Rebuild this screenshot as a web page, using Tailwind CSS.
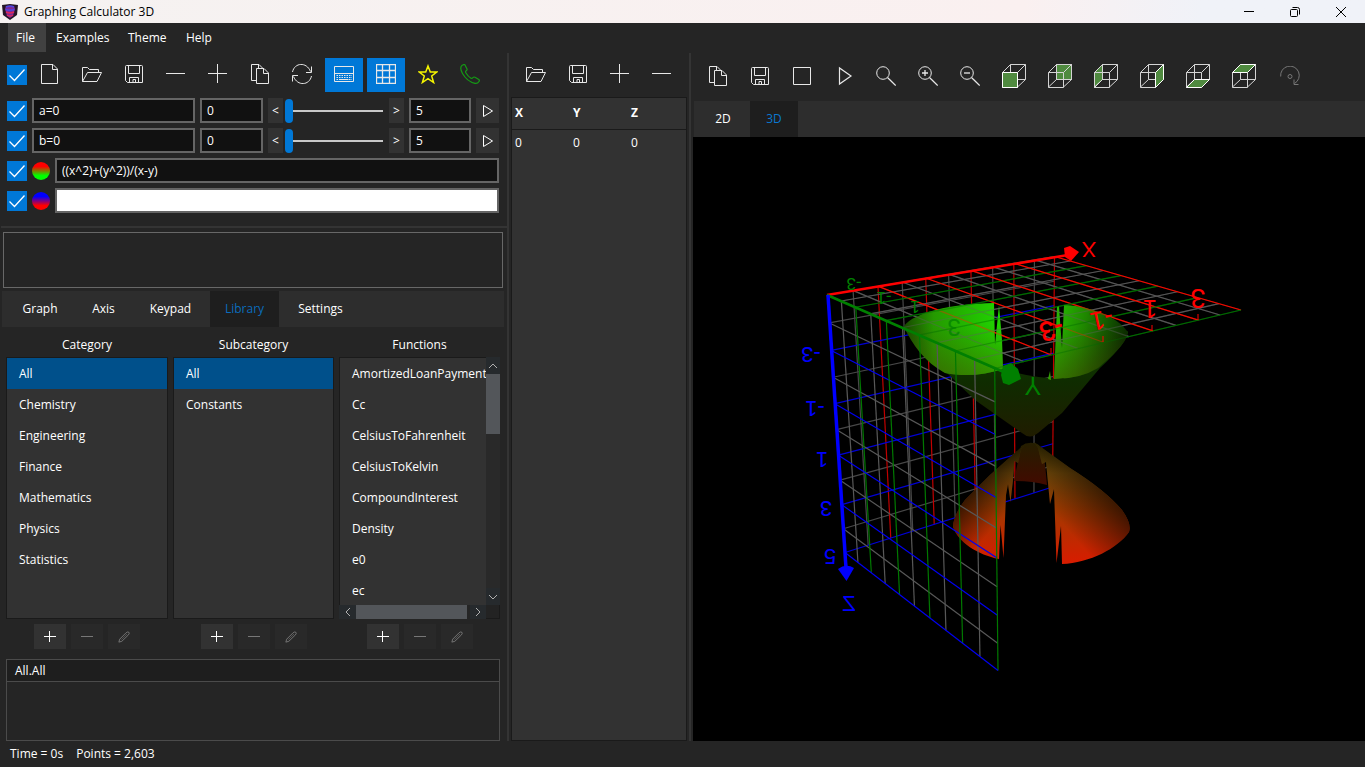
<!DOCTYPE html>
<html lang="en">
<head>
<meta charset="utf-8">
<title>Graphing Calculator 3D</title>
<script src="https://cdn.jsdelivr.net/npm/@tailwindcss/browser@4"></script>
</head>
<body class="h-screen overflow-hidden flex flex-col bg-[#252525] text-white text-[12px] leading-4 font-['Open_Sans','Noto_Sans',sans-serif]">

<svg class="hidden" aria-hidden="true">
  <defs>
    <symbol id="i-new" viewBox="0 0 20 20"><path d="M1.500.5H13L17.500 5V19.500H1.500ZM12.500.5V5.500H17.500"/></symbol>
    <symbol id="i-open" viewBox="0 0 20 20"><path d="M.5 17.500V3.500H5.500L7.500 5.500H16.500V8.500M.5 17.500L5.500 8.500H19.500L15 17.500Z"/></symbol>
    <symbol id="i-save" viewBox="0 0 20 20"><path d="M1.500 2.500Q1.500 1.500 2.500 1.500H17.500Q18.500 1.500 18.500 2.500V18.500H3.500L1.500 16.500ZM4.500 1.500V9.500H15.500V1.500M5.500 18.500V13.500H14.500V18.500M9 18.500V15.500H11.500V18.500"/></symbol>
    <symbol id="i-minus" viewBox="0 0 20 20"><path d="M0 9.500H19"/></symbol>
    <symbol id="i-plus" viewBox="0 0 20 20"><path d="M0 9.500H19M9.500 0V19"/></symbol>
    <symbol id="i-copy" viewBox="0 0 20 20"><path d="M6 16.500H1.500V.5H9L12.500 4M6.500 4.500H14L18.500 9V19.500H6.500ZM13.500 4.500V9.500H18.500M8.500.5V4"/></symbol>
    <symbol id="i-refresh" viewBox="0 0 20 20"><path d="M.5 8C2.500-1.500 14.500-2.500 18.500 7.500M19.500 2.500V8.500H14M19.500 12C17.500 21.500 5.500 22.500 1.500 12.500M.5 17.500V11.500H6"/></symbol>
    <symbol id="i-keys" viewBox="0 0 20 20"><path d="M.5 2.500H19.500V17.500H.5ZM.5 9.500H19.500"/><path d="M2.500 11.500H18M2.500 13.500H18M2.500 15.500H18" stroke-dasharray="1.500 1"/><path d="M5.500 15.500H14.500" /></symbol>
    <symbol id="i-grid" viewBox="0 0 20 20"><path d="M.5.5H19.500V19.500H.5ZM6.500 1V19M13.500 1V19M1 6.500H19M1 13.500H19" stroke-width="1.300"/></symbol>
    <symbol id="i-star" viewBox="0 0 20 20"><path d="M10 2L12.300 8.100H18.700L13.700 12L15.600 18.500L10 14.700L4.400 18.500L6.300 12L1.300 8.100H7.700Z" stroke-width="1.500"/></symbol>
    <symbol id="i-phone" viewBox="0 0 20 20"><path d="M2.200 1.200L4 .5Q5 .5 5.500 2L7 5Q7.300 6 6.200 6.700Q5 7.500 6 9Q8 12.500 11 14.300Q12.200 14.700 13 13.500Q13.800 12.700 15 13.200L18.800 15.500Q19.800 16.500 19 17.500Q17.500 19.800 15 19.300Q7 17.500 2.500 9.500Q-.8 3.500 2.200 1.200Z" stroke-width="1.200"/></symbol>
    <symbol id="i-stop" viewBox="0 0 20 20"><path d="M1.500 1.500H18.500V18.500H1.500Z"/></symbol>
    <symbol id="i-play" viewBox="0 0 20 20"><path d="M5.500 2V18L17 10Z" stroke-width="1.200"/></symbol>
    <symbol id="i-find" viewBox="0 0 20 20"><circle cx="7" cy="7" r="6.300"/><path d="M11.500 11.500L19.700 19.500" stroke-width="1.300"/></symbol>
    <symbol id="i-in" viewBox="0 0 20 20"><circle cx="7" cy="7" r="6.300"/><path d="M11.500 11.500L19.700 19.500" stroke-width="1.300"/><path d="M4 7H10M7 4V10" stroke-width="1.300"/></symbol>
    <symbol id="i-out" viewBox="0 0 20 20"><circle cx="7" cy="7" r="6.300"/><path d="M11.500 11.500L19.700 19.500" stroke-width="1.300"/><path d="M4 7H10" stroke-width="1.300"/></symbol>
    <symbol id="i-cube" viewBox="0 0 24 24"><path d="M8.500.5H23.500V15.500H8.500ZM.5 8.500L8.500.5M15.500 8.500L23.500.5M.5 23L8.500 15.500M15.500 23L23.500 15.500M.5 8.500H15.500V23.500H.5Z"/></symbol>
    <symbol id="i-rot" viewBox="0 0 20 20"><path d="M.7 10.500A9.300 9.300 0 1 1 14.500 17.500M14 13.500V18.500H18.500" /><circle cx="10" cy="10.500" r="2"/></symbol>
    <symbol id="i-pencil" viewBox="0 0 14 14"><path d="M1 13L2 9.500L9.500 2Q11.500.5 12.700 1.500Q13.700 2.700 12.200 4.500L4.500 12Z"/><path d="M4 10L10.500 3.500" stroke-width=".6"/></symbol>
    <symbol id="i-check" viewBox="0 0 20 20"><path d="M2.500 10.500L7.500 15.500L17.500 4.500" stroke-width="1.300"/></symbol>
  </defs>
</svg>

<header class="h-[23px] shrink-0 flex items-center pl-[2px] pr-px text-black bg-linear-to-r from-[#f5f2f1] via-[#faf0f0] via-75% to-[#f0f2f8] to-88%">
  <svg class="w-4 h-4" viewBox="0 0 16 16" aria-hidden="true">
    <path d="M0 1L8 0L16 1L15 11L8 16L1 11Z" fill="#241626"/>
    <path d="M4 2H12L13 5L11 12L8 14L5 12L3 5Z" fill="#7a2a98"/>
    <path d="M4 3Q8 1 12 3M3.500 5.500Q8 7 12.500 5.500" stroke="#5146e0" stroke-width="1.500" fill="none"/>
    <path d="M4 8Q8 10 12 8M5 11Q8 13 11 11" stroke="#e02858" stroke-width="1.500" fill="none"/>
  </svg>
  <h1 class="ml-[6px] flex-1">Graphing Calculator 3D</h1>
  <div class="flex h-full text-black">
    <button aria-label="Minimize" class="w-[46px] grid place-items-center"><svg class="w-3 h-3" viewBox="0 0 12 12" fill="none" stroke="currentColor"><path d="M1 5.500H11"/></svg></button>
    <button aria-label="Restore" class="w-[46px] grid place-items-center"><svg class="w-3 h-3" viewBox="0 0 12 12" fill="none" stroke="currentColor"><rect x="1.500" y="3.500" width="7" height="7" rx="1"/><path d="M3.500 1.500H8.500Q10.500 1.500 10.500 3.500V8.500"/></svg></button>
    <button aria-label="Close" class="w-[46px] grid place-items-center"><svg class="w-3 h-3" viewBox="0 0 12 12" fill="none" stroke="currentColor"><path d="M1 1L11 11M11 1L1 11"/></svg></button>
  </div>
</header>

<nav class="h-[30px] shrink-0 flex pl-2" aria-label="Menu">
  <button class="h-[29px] w-[38px] mr-[2px] pl-2 text-left bg-[#414141]">File</button>
  <button class="h-[29px] w-[72px] pl-2 text-left">Examples</button>
  <button class="h-[29px] w-[58px] pl-2 text-left">Theme</button>
  <button class="h-[29px] w-[40px] pl-2 text-left">Help</button>
</nav>

<main class="flex-1 min-h-0 flex">
  <section class="w-[507px] shrink-0 flex flex-col">
    <div class="mt-[5px] h-[34px] flex items-center gap-1 pl-[7px] [&_button]:w-[38px] [&_button]:h-[34px] [&_button]:pb-[2px] [&_button]:grid [&_button]:place-items-center [&_button_svg]:w-5 [&_button_svg]:h-5 [&_svg]:fill-none [&_svg]:stroke-current text-[#e8e8e8]">
      <label class="relative w-5 h-5"><input type="checkbox" checked aria-label="Select all" class="appearance-none block w-5 h-5 bg-[#0078d7]"><svg class="absolute inset-0 w-5 h-5 pointer-events-none text-white"><use href="#i-check"/></svg></label>
      <button aria-label="New"><svg><use href="#i-new"/></svg></button>
      <button aria-label="Open"><svg><use href="#i-open"/></svg></button>
      <button aria-label="Save"><svg><use href="#i-save"/></svg></button>
      <button aria-label="Remove"><svg><use href="#i-minus"/></svg></button>
      <button aria-label="Add"><svg><use href="#i-plus"/></svg></button>
      <button aria-label="Copy"><svg><use href="#i-copy"/></svg></button>
      <button aria-label="Refresh"><svg><use href="#i-refresh"/></svg></button>
      <button aria-label="Keypad" aria-pressed="true" class="bg-[#0078d7]"><svg><use href="#i-keys"/></svg></button>
      <button aria-label="Table" aria-pressed="true" class="bg-[#0078d7]"><svg><use href="#i-grid"/></svg></button>
      <button aria-label="Favorites" class="text-[#f5f500]"><svg><use href="#i-star"/></svg></button>
      <button aria-label="Contact" class="text-[#159a15]"><svg><use href="#i-phone"/></svg></button>
    </div>

    <div class="mt-[6px] flex flex-col gap-[5px] pl-[7px] pr-2 [&>div]:flex [&>div]:items-center [&>div]:gap-[5px] [&>div]:h-[25px] [&_label_svg]:fill-none [&_label_svg]:stroke-white">
      <div>
        <label class="relative w-5 h-5"><input type="checkbox" checked aria-label="Use a" class="appearance-none block w-5 h-5 bg-[#0078d7]"><svg class="absolute inset-0 w-5 h-5 pointer-events-none"><use href="#i-check"/></svg></label>
        <input aria-label="Parameter a" value="a=0" class="w-[163px] h-[25px] px-[5px] border-2 border-[#656565] bg-[#111]">
        <input aria-label="Minimum a" value="0" class="w-[63px] h-[25px] px-[5px] border-2 border-[#656565] bg-[#111]">
        <div class="flex-1 min-w-0 flex items-center">
          <button aria-label="Decrease a" class="w-[15px] shrink-0 h-[25px] bg-[#323232]">&lt;</button>
          <input type="range" min="0" max="5" value="0" aria-label="Value a" class="flex-1 min-w-0 ml-[2px] mr-[6px] h-6 appearance-none bg-transparent [&::-webkit-slider-runnable-track]:h-[2px] [&::-webkit-slider-runnable-track]:bg-[#c8c8c8] [&::-webkit-slider-thumb]:appearance-none [&::-webkit-slider-thumb]:w-2 [&::-webkit-slider-thumb]:h-6 [&::-webkit-slider-thumb]:-mt-[11px] [&::-webkit-slider-thumb]:rounded [&::-webkit-slider-thumb]:bg-[#0078d7]">
          <button aria-label="Increase a" class="w-[15px] shrink-0 h-[25px] bg-[#323232]">&gt;</button>
        </div>
        <input aria-label="Maximum a" value="5" class="w-[62px] h-[25px] px-[5px] border-2 border-[#656565] bg-[#111]">
        <button aria-label="Play a" class="w-[23px] h-[25px] bg-[#323232] grid place-items-center"><svg class="w-3 h-3 fill-none stroke-white" viewBox="0 0 12 12"><path d="M1.500.500V11.500L10.500 6Z"/></svg></button>
      </div>
      <div>
        <label class="relative w-5 h-5"><input type="checkbox" checked aria-label="Use b" class="appearance-none block w-5 h-5 bg-[#0078d7]"><svg class="absolute inset-0 w-5 h-5 pointer-events-none"><use href="#i-check"/></svg></label>
        <input aria-label="Parameter b" value="b=0" class="w-[163px] h-[25px] px-[5px] border-2 border-[#656565] bg-[#111]">
        <input aria-label="Minimum b" value="0" class="w-[63px] h-[25px] px-[5px] border-2 border-[#656565] bg-[#111]">
        <div class="flex-1 min-w-0 flex items-center">
          <button aria-label="Decrease b" class="w-[15px] shrink-0 h-[25px] bg-[#323232]">&lt;</button>
          <input type="range" min="0" max="5" value="0" aria-label="Value b" class="flex-1 min-w-0 ml-[2px] mr-[6px] h-6 appearance-none bg-transparent [&::-webkit-slider-runnable-track]:h-[2px] [&::-webkit-slider-runnable-track]:bg-[#c8c8c8] [&::-webkit-slider-thumb]:appearance-none [&::-webkit-slider-thumb]:w-2 [&::-webkit-slider-thumb]:h-6 [&::-webkit-slider-thumb]:-mt-[11px] [&::-webkit-slider-thumb]:rounded [&::-webkit-slider-thumb]:bg-[#0078d7]">
          <button aria-label="Increase b" class="w-[15px] shrink-0 h-[25px] bg-[#323232]">&gt;</button>
        </div>
        <input aria-label="Maximum b" value="5" class="w-[62px] h-[25px] px-[5px] border-2 border-[#656565] bg-[#111]">
        <button aria-label="Play b" class="w-[23px] h-[25px] bg-[#323232] grid place-items-center"><svg class="w-3 h-3 fill-none stroke-white" viewBox="0 0 12 12"><path d="M1.500.500V11.500L10.500 6Z"/></svg></button>
      </div>
      <div>
        <label class="relative w-5 h-5"><input type="checkbox" checked aria-label="Show function 1" class="appearance-none block w-5 h-5 bg-[#0078d7]"><svg class="absolute inset-0 w-5 h-5 pointer-events-none"><use href="#i-check"/></svg></label>
        <button aria-label="Color of function 1" class="w-[18px] h-[18px] rounded-full bg-linear-to-b/srgb from-[#f00] from-25% to-[#0f0] to-75%"></button>
        <input aria-label="Function 1" value="((x^2)+(y^2))/(x-y)" class="flex-1 min-w-0 h-[25px] px-[5px] border-2 border-[#656565] bg-[#111]">
      </div>
      <div>
        <label class="relative w-5 h-5"><input type="checkbox" checked aria-label="Show function 2" class="appearance-none block w-5 h-5 bg-[#0078d7]"><svg class="absolute inset-0 w-5 h-5 pointer-events-none"><use href="#i-check"/></svg></label>
        <button aria-label="Color of function 2" class="w-[18px] h-[18px] rounded-full bg-linear-to-b/srgb from-[#00f] from-25% to-[#f00] to-75%"></button>
        <input aria-label="Function 2" class="flex-1 min-w-0 h-[25px] px-[5px] border-2 border-[#656565] bg-white text-black">
      </div>
    </div>

    <div class="mt-[13px] ml-px h-[2px] shrink-0 bg-[#343434]"></div>
    <textarea aria-label="Result" readonly class="block mt-1 ml-[3px] mr-1 h-[56px] shrink-0 resize-none border border-[#686868]"></textarea>

    <div role="tablist" class="mt-[3px] ml-[2px] mr-[3px] pl-[2px] h-9 shrink-0 flex bg-[#2d2d2d]">
      <button role="tab" class="w-[72px]">Graph</button>
      <button role="tab" class="w-[55px]">Axis</button>
      <button role="tab" class="w-[79px]">Keypad</button>
      <button role="tab" aria-selected="true" class="w-[69px] bg-[#1e1e1e] text-[#0a6cbd]">Library</button>
      <button role="tab" class="w-[83px]">Settings</button>
    </div>

    <div class="flex-1 min-h-0 grid grid-cols-[162fr_161fr_161fr] gap-[5px] pl-[6px] pr-[7px]">
      <div class="flex flex-col min-h-0 min-w-0">
        <h2 class="h-[30px] pt-[5px] flex items-center justify-center">Category</h2>
        <ul class="flex-1 min-h-0 overflow-hidden border border-[#1a1a1a] bg-[#323232] [&>li]:h-[31px] [&>li]:pl-3 [&>li]:flex [&>li]:items-center">
          <li class="bg-[#00508b]">All</li><li>Chemistry</li><li>Engineering</li><li>Finance</li><li>Mathematics</li><li>Physics</li><li>Statistics</li>
        </ul>
        <div class="mt-[5px] flex justify-center gap-[5px] [&>button]:w-8 [&>button]:h-[25px] [&>button]:grid [&>button]:place-items-center [&_svg]:w-3 [&_svg]:h-3 [&_svg]:fill-none [&_svg]:stroke-current">
          <button aria-label="Add category" class="bg-[#323232]"><svg viewBox="0 0 12 12"><path d="M0 5.500H12M5.500 0V11"/></svg></button>
          <button aria-label="Remove category" disabled class="bg-[#292929] text-[#777]"><svg viewBox="0 0 12 12"><path d="M0 5.500H12"/></svg></button>
          <button aria-label="Edit category" disabled class="bg-[#292929] text-[#808080]"><svg viewBox="0 0 14 14"><use href="#i-pencil" width="14" height="14"/></svg></button>
        </div>
      </div>
      <div class="flex flex-col min-h-0 min-w-0">
        <h2 class="h-[30px] pt-[5px] flex items-center justify-center">Subcategory</h2>
        <ul class="flex-1 min-h-0 overflow-hidden border border-[#1a1a1a] bg-[#323232] [&>li]:h-[31px] [&>li]:pl-3 [&>li]:flex [&>li]:items-center">
          <li class="bg-[#00508b]">All</li><li>Constants</li>
        </ul>
        <div class="mt-[5px] flex justify-center gap-[5px] [&>button]:w-8 [&>button]:h-[25px] [&>button]:grid [&>button]:place-items-center [&_svg]:w-3 [&_svg]:h-3 [&_svg]:fill-none [&_svg]:stroke-current">
          <button aria-label="Add subcategory" class="bg-[#323232]"><svg viewBox="0 0 12 12"><path d="M0 5.500H12M5.500 0V11"/></svg></button>
          <button aria-label="Remove subcategory" disabled class="bg-[#292929] text-[#777]"><svg viewBox="0 0 12 12"><path d="M0 5.500H12"/></svg></button>
          <button aria-label="Edit subcategory" disabled class="bg-[#292929] text-[#808080]"><svg viewBox="0 0 14 14"><use href="#i-pencil" width="14" height="14"/></svg></button>
        </div>
      </div>
      <div class="flex flex-col min-h-0 min-w-0">
        <h2 class="h-[30px] pt-[5px] flex items-center justify-center">Functions</h2>
        <div class="flex-1 min-h-0 flex flex-col">
          <div class="flex-1 min-h-0 flex">
            <ul class="flex-1 min-w-0 overflow-hidden border border-r-0 border-b-0 border-[#1a1a1a] bg-[#323232] [&>li]:h-[31px] [&>li]:pl-3 [&>li]:flex [&>li]:items-center">
              <li>AmortizedLoanPayment</li><li>Cc</li><li>CelsiusToFahrenheit</li><li>CelsiusToKelvin</li><li>CompoundInterest</li><li>Density</li><li>e0</li><li>ec</li>
            </ul>
            <div class="w-[14px] flex flex-col bg-[#292929] text-[#b0b0b0] [&_svg]:w-[10px] [&_svg]:h-[10px] [&_svg]:fill-none [&_svg]:stroke-current">
              <button aria-label="Scroll up" class="h-[17px] grid place-items-center bg-[#262a2d]"><svg viewBox="0 0 10 10"><path d="M1 7L5 3L9 7"/></svg></button>
              <div class="h-[60px] bg-[#53565a]"></div>
              <button aria-label="Scroll down" class="mt-auto h-[17px] grid place-items-center bg-[#262a2d]"><svg viewBox="0 0 10 10"><path d="M1 3L5 7L9 3"/></svg></button>
            </div>
          </div>
          <div class="h-[14px] flex text-[#b0b0b0] [&_svg]:w-[10px] [&_svg]:h-[10px] [&_svg]:fill-none [&_svg]:stroke-current">
            <button aria-label="Scroll left" class="w-[17px] grid place-items-center bg-[#262a2d]"><svg viewBox="0 0 10 10"><path d="M7 1L3 5L7 9"/></svg></button>
            <div class="flex-1 mr-[3px] bg-[#53565a]"></div>
            <button aria-label="Scroll right" class="w-4 grid place-items-center bg-[#262a2d]"><svg viewBox="0 0 10 10"><path d="M3 1L7 5L3 9"/></svg></button>
            <div class="w-[14px] border-r border-b border-[#1a1a1a] bg-[#232323]"></div>
          </div>
        </div>
        <div class="mt-[5px] flex justify-center gap-[5px] [&>button]:w-8 [&>button]:h-[25px] [&>button]:grid [&>button]:place-items-center [&_svg]:w-3 [&_svg]:h-3 [&_svg]:fill-none [&_svg]:stroke-current">
          <button aria-label="Add function" class="bg-[#323232]"><svg viewBox="0 0 12 12"><path d="M0 5.500H12M5.500 0V11"/></svg></button>
          <button aria-label="Remove function" disabled class="bg-[#292929] text-[#777]"><svg viewBox="0 0 12 12"><path d="M0 5.500H12"/></svg></button>
          <button aria-label="Edit function" disabled class="bg-[#292929] text-[#808080]"><svg viewBox="0 0 14 14"><use href="#i-pencil" width="14" height="14"/></svg></button>
        </div>
      </div>
    </div>

    <div class="mt-[10px] ml-[6px] mr-[7px] h-[82px] shrink-0 border border-[#4b4b4b]">
      <div class="h-[22px] pl-2 flex items-center border-b border-[#4b4b4b] bg-[#1e1e1e]">All.All</div>
    </div>
  </section>

  <div class="w-[2px] shrink-0 bg-[#343434]"></div>

  <section class="w-[176px] mx-[2px] shrink-0 flex flex-col">
    <div class="mt-1 h-[34px] flex gap-1 pl-[6px] text-[#e8e8e8] [&_button]:w-[38px] [&_button]:grid [&_button]:place-items-center [&_svg]:w-5 [&_svg]:h-5 [&_svg]:fill-none [&_svg]:stroke-current">
      <button aria-label="Open table"><svg><use href="#i-open"/></svg></button>
      <button aria-label="Save table"><svg><use href="#i-save"/></svg></button>
      <button aria-label="Add row"><svg><use href="#i-plus"/></svg></button>
      <button aria-label="Remove row"><svg><use href="#i-minus"/></svg></button>
    </div>
    <div class="mt-[6px] flex-1 border border-[#1a1a1a] bg-[#323232]">
      <table class="w-full table-fixed border-collapse text-left">
        <thead><tr class="h-[31px] border-b border-[#1a1a1a]"><th class="w-[58px] p-0 pl-[3px]">X</th><th class="w-[58px] p-0 pl-[3px]">Y</th><th class="p-0 pl-[3px]">Z</th></tr></thead>
        <tbody><tr class="h-[27px]"><td class="p-0 pl-[3px]">0</td><td class="p-0 pl-[3px]">0</td><td class="p-0 pl-[3px]">0</td></tr></tbody>
      </table>
    </div>
  </section>

  <div class="w-[2px] shrink-0 bg-[#343434]"></div>

  <section class="ml-[2px] flex-1 min-w-0 flex flex-col">
    <div class="h-[46px] mb-[2px] shrink-0 flex items-center gap-1 pl-[6px] text-[#e8e8e8] [&_button]:h-[34px] [&_button]:grid [&_button]:place-items-center [&_svg]:fill-none [&_svg]:stroke-current [&_svg]:w-5 [&_svg]:h-5">
      <button class="w-[38px]" aria-label="Copy graph"><svg><use href="#i-copy"/></svg></button>
      <button class="w-[38px]" aria-label="Save graph"><svg><use href="#i-save"/></svg></button>
      <button class="w-[38px]" aria-label="Stop"><svg><use href="#i-stop"/></svg></button>
      <button class="w-[38px]" aria-label="Play"><svg><use href="#i-play"/></svg></button>
      <button class="w-[38px]" aria-label="Zoom reset"><svg><use href="#i-find"/></svg></button>
      <button class="w-[38px]" aria-label="Zoom in"><svg><use href="#i-in"/></svg></button>
      <button class="w-[38px]" aria-label="Zoom out"><svg><use href="#i-out"/></svg></button>
      <div class="flex gap-1 text-[#d4d4d4] [&_button]:w-[42px] [&_.cube]:w-6 [&_.cube]:h-6">
        <button aria-label="Front view"><svg class="cube" viewBox="0 0 24 24"><use href="#i-cube"/><path d="M.5 8.500H15.500V23.500H.5Z" fill="#4f8a3f" stroke="#fff"/></svg></button>
        <button aria-label="Back view"><svg class="cube" viewBox="0 0 24 24"><path d="M8.500.5H23.500V15.500H8.500Z" fill="#4f8a3f" stroke="#fff"/><use href="#i-cube"/></svg></button>
        <button aria-label="Left view"><svg class="cube" viewBox="0 0 24 24"><path d="M.5 8.500L8.500.5V15.500L.5 23.500Z" fill="#4f8a3f" stroke="#fff"/><use href="#i-cube"/></svg></button>
        <button aria-label="Right view"><svg class="cube" viewBox="0 0 24 24"><use href="#i-cube"/><path d="M15.500 8.500L23.500.5V15.500L15.500 23.500Z" fill="#4f8a3f" stroke="#fff"/></svg></button>
        <button aria-label="Bottom view"><svg class="cube" viewBox="0 0 24 24"><use href="#i-cube"/><path d="M.5 23.500L8.500 15.500H23.500L15.500 23.500Z" fill="#4f8a3f" stroke="#fff"/></svg></button>
        <button aria-label="Top view"><svg class="cube" viewBox="0 0 24 24"><use href="#i-cube"/><path d="M.5 8.500L8.500.5H23.500L15.500 8.500Z" fill="#4f8a3f" stroke="#fff"/></svg></button>
        <button aria-label="Rotate" disabled class="text-[#777]"><svg><use href="#i-rot"/></svg></button>
      </div>
    </div>
    <div role="tablist" class="h-9 shrink-0 flex ml-px pl-[2px] bg-[#2d2d2d]">
      <button role="tab" class="w-[54px]">2D</button>
      <button role="tab" aria-selected="true" class="w-12 bg-[#1e1e1e] text-[#0a78d0]">3D</button>
    </div>
    <svg class="flex-1 min-h-0 w-full bg-black" viewBox="693 137 672 604" role="img" aria-label="3D plot">
      <defs>
        <linearGradient id="upL" x1="0" y1="0" x2="1" y2="0"><stop offset="0" stop-color="#184800"/><stop offset=".3" stop-color="#259a00"/><stop offset="1" stop-color="#20d800"/></linearGradient>
        <linearGradient id="shade" x1="0" y1="0" x2="0" y2="1"><stop offset=".3" stop-color="#503000" stop-opacity="0"/><stop offset="1" stop-color="#503000" stop-opacity=".4"/></linearGradient>
        <linearGradient id="upR" x1="0" y1="0" x2="1" y2=".2"><stop offset="0" stop-color="#26c000"/><stop offset=".45" stop-color="#1f8600"/><stop offset="1" stop-color="#0a2e00"/></linearGradient>
        <linearGradient id="upB" x1="0" y1="0" x2="0" y2="1"><stop offset="0" stop-color="#0e4400"/><stop offset=".5" stop-color="#0f2c00"/><stop offset="1" stop-color="#201c00"/></linearGradient>
        <linearGradient id="lo" gradientUnits="userSpaceOnUse" x1="0" y1="443" x2="0" y2="563"><stop offset="0" stop-color="#3a3200"/><stop offset=".25" stop-color="#80520a"/><stop offset=".55" stop-color="#a03a00"/><stop offset="1" stop-color="#d81c00"/></linearGradient>
        <linearGradient id="loDarkR" gradientUnits="userSpaceOnUse" x1="1068" y1="530" x2="1118" y2="488"><stop offset="0" stop-color="#000" stop-opacity="0"/><stop offset="1" stop-color="#000" stop-opacity=".75"/></linearGradient>
        <linearGradient id="loDarkL" gradientUnits="userSpaceOnUse" x1="1000" y1="520" x2="965" y2="490"><stop offset="0" stop-color="#000" stop-opacity="0"/><stop offset="1" stop-color="#000" stop-opacity=".75"/></linearGradient>
        <linearGradient id="loIn" x1="0" y1="0" x2="0" y2="1"><stop offset="0" stop-color="#241e00"/><stop offset="1" stop-color="#420a00"/></linearGradient>
      </defs>
      <g id="back" fill="none"></g>
      <g>
        <path d="M904 327C912 345 930 362 948 374L975 400L1022 433Q1030 440 1038 433L1062 413L1100 368Q1128 342 1128 331L1063 379Q1030 378 1003 369Z" fill="url(#upB)"/>
        <path d="M904 326C915 312 950 304 994 303L995 345L999 305L1002 340L1003 369C985 375 965 377 945 373C925 362 912 345 904 326Z" fill="url(#upL)"/>
        <path d="M904 326C915 312 950 304 994 303L995 345L999 305L1002 340L1003 369C985 375 965 377 945 373C925 362 912 345 904 326Z" fill="url(#shade)"/>
        <path d="M1054 379L1057 307L1059 306L1062 348L1064 305C1090 306 1118 317 1127 331C1130 340 1112 356 1098 368Q1080 379 1054 379Z" fill="url(#upR)"/>
        <path d="M1054 379L1057 307L1059 306L1062 348L1064 305C1090 306 1118 317 1127 331C1130 340 1112 356 1098 368Q1080 379 1054 379Z" fill="url(#shade)"/>
        <path d="M1048 379L1050 371L1051 380Z" fill="#2fa000"/>
        <path d="M1021 446L1014 481Q1032 481 1047 485L1045 464L1039 445Q1030 440 1021 446Z" fill="url(#loIn)"/>
        <path d="M1026 443L1008 459L990 475L965 500Q953 516 953 527C958 542 978 555 999 559L1000.500 525L1003.500 558L1006 495L1008 484L1010.500 502L1013 480L1014.500 461L1018 463L1021 449Z" fill="url(#lo)"/>
        <path d="M1026 443L1008 459L990 475L965 500Q953 516 953 527C958 542 978 555 999 559L1000.500 525L1003.500 558L1006 495L1008 484L1010.500 502L1013 480L1014.500 461L1018 463L1021 449Z" fill="url(#loDarkL)"/>
        <path d="M1034 442L1038 448L1042 464L1046 462L1050 504L1054 489L1056.500 563L1061 526L1062 564C1090 563 1118 548 1129 532Q1132 524 1122 510Q1105 490 1070 468Z" fill="url(#lo)"/>
        <path d="M1034 442L1038 448L1042 464L1046 462L1050 504L1054 489L1056.500 563L1061 526L1062 564C1090 563 1118 548 1129 532Q1132 524 1122 510Q1105 490 1070 468Z" fill="url(#loDarkR)"/>
      </g>
      <g id="veil" fill="none" opacity=".4"></g>
      <g id="front" fill="none"></g>
      <g>
        <path d="M827 295L1068 255" stroke="#f00" stroke-width="2.500"/>
        <path d="M827 295L1006 373" stroke="#008000" stroke-width="2.500"/>
        <path d="M828 295L846 568" stroke="#00f" stroke-width="3.500"/>
        <path d="M1064 248L1070 246L1079 252L1071 261L1065 257Z" fill="#f00"/>
        <path d="M1003 366L1011 363L1018 369L1021 379L1009 385L1003 383L1001 375Z" fill="#008000"/>
        <path d="M838 569Q846 563 854 568L846.500 581Z" fill="#00f"/>
        <path d="M1051 354V348M1103 342V336M1152 331V325M1198 320V314" stroke="#f00"/>
      </g>
      <g font-family="Liberation Sans, sans-serif" text-anchor="middle" font-size="25">
        <g fill="#f00">
          <text transform="translate(1089 242) rotate(180)" font-size="22">X</text>
          <text transform="translate(1049 321) rotate(164)" font-size="27" stroke="#f00" stroke-width=".5">-3</text>
          <text transform="translate(1100 311) rotate(168)" font-size="26">-1</text>
          <text transform="translate(1150 300) rotate(180)" font-size="26">1</text>
          <text transform="translate(1198 289) rotate(180)" font-size="27">3</text>
        </g>
        <g fill="#00f" font-size="22">
          <text transform="translate(811 347) rotate(180)">-3</text>
          <text transform="translate(815 401) rotate(180)">-1</text>
          <text transform="translate(822 452) rotate(180)">1</text>
          <text transform="translate(826 501) rotate(180)">3</text>
          <text transform="translate(830 549) rotate(180)">5</text>
          <text transform="translate(849 611) scale(-1 1)">Z</text>
        </g>
        <g fill="#008000" font-size="17">
          <text transform="translate(1033 377) rotate(180)" font-size="25">Y</text>
          <text transform="translate(854 278) rotate(180)">-3</text>
          <text transform="translate(884 292) rotate(180)">-1</text>
          <text transform="translate(915 301) rotate(180)">1</text>
          <text transform="translate(954 319) rotate(180)" font-size="24" opacity=".7">3</text>
        </g>
      </g>
    </svg>
  </section>
</main>

<footer class="h-[26px] shrink-0 flex items-center gap-[13px] pl-[10px]"><span>Time = 0s</span><span>Points = 2,603</span></footer>

<script>
  // Each grid plane is a 10 x 10 mesh in perspective, given by its four projected corners.
  const plane = ([x0, y0], [x1, y1], [x2, y2], [x3, y3]) => {
    const dx1 = x1 - x2, dx2 = x3 - x2, sx = x0 - x1 + x2 - x3;
    const dy1 = y1 - y2, dy2 = y3 - y2, sy = y0 - y1 + y2 - y3;
    const d = dx1 * dy2 - dx2 * dy1;
    const g = (sx * dy2 - dx2 * sy) / d, h = (dx1 * sy - sx * dy1) / d;
    return (u, v) => {
      const w = g * u + h * v + 1;
      return [((x1 - x0 + g * x1) * u + (x3 - x0 + h * x3) * v + x0) / w,
              ((y1 - y0 + g * y1) * u + (y3 - y0 + h * y3) * v + y0) / w];
    };
  };
  const line = (group, a, b, color) => {
    const p = document.createElementNS('http://www.w3.org/2000/svg', 'path');
    p.setAttribute('d', `M${a}L${b}`);
    p.setAttribute('stroke', color);
    p.setAttribute('stroke-width', 1.2);
    document.getElementById(group).append(p);
  };
  const mesh = (group, at, uColor, vColor, gray) => {
    for (const odd of [1, 0])
      for (let i = odd; i <= 10; i += 2) {
        line(group, at(i / 10, 0), at(i / 10, 1), odd ? gray : uColor);
        line(group, at(0, i / 10), at(1, i / 10), odd ? gray : vColor);
      }
  };
  const O = [827.5, 295], X = [1054.5, 256.5], Y = [994.7, 368.5], Z = [845, 552.5];
  const floor = plane(O, X, [1241, 310], Y);
  mesh('back', plane(O, X, [1052.5, 487], Z), '#c00000', '#0000d8', '#484848');
  mesh('back', floor, '#e80000', '#006a00', '#505050');
  // The floor shows through the surface faintly.
  mesh('veil', floor, '#ff2000', '#006a00', '#606060');
  mesh('front', plane(O, Y, [998, 670.5], Z), '#007800', '#0000f0', '#585858');
</script>
</body>
</html>
